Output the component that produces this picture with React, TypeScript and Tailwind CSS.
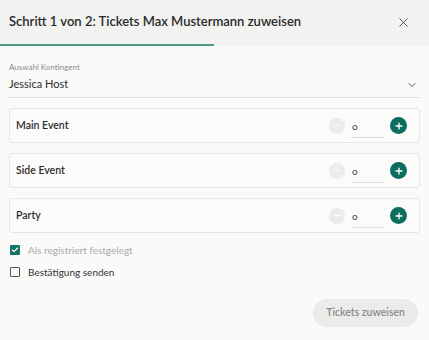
import { X, ChevronDown, Check, Plus, Minus } from 'lucide-react'

const events = ['Main Event', 'Side Event', 'Party']

function TicketRow({ name }: { name: string }) {
  return (
    <div className="flex items-center h-[35px] pl-[6px] pr-[12px] border border-[#e6e6e4] rounded-[3px] bg-[#fbfbfa]">
      <span className="flex-1 text-[10.5px] font-semibold text-[#2c2c2c]">{name}</span>
      <button className="w-[16px] h-[16px] rounded-full bg-[#ebebea] flex items-center justify-center">
        <Minus className="w-[9px] h-[9px] text-white" strokeWidth={3} />
      </button>
      <div className="ml-[6px] w-[33px] h-[24px] border-b border-[#dcdcdc] flex items-center">
        <span className="text-[10px] text-[#444] pl-[1px] pt-[2px]">o</span>
      </div>
      <button className="ml-[6px] w-[17px] h-[17px] rounded-full bg-[#0d6d5e] flex items-center justify-center">
        <Plus className="w-[10px] h-[10px] text-white" strokeWidth={3.2} />
      </button>
    </div>
  )
}

export default function App() {
  return (
    <div className="w-[429px] h-[340px] bg-[#fafaf9] font-['Lato',sans-serif] overflow-hidden">
      <div className="bg-[#f2f2f1] h-[44px] flex items-center justify-between pl-[9px] pr-[18px]">
        <h2 className="text-[13px] font-semibold text-[#2a2a2a]">
          Schritt 1 von 2: Tickets Max Mustermann zuweisen
        </h2>
        <X className="w-[15px] h-[15px] text-[#555]" strokeWidth={1.6} />
      </div>
      <div className="h-[2px] bg-[#f2f2f1]">
        <div className="h-full w-[214px] bg-[#4e9a8c]" />
      </div>

      <div className="px-[9px] pt-[17px]">
        <div className="text-[8px] text-[#8a8a8a] leading-none">Auswahl Kontingent</div>
        <div className="flex items-center justify-between h-[26px] mt-[1px] border-b border-[#dedede] pr-[2px]">
          <span className="text-[11px] text-[#2a2a2a]">Jessica Host</span>
          <ChevronDown className="w-[12px] h-[12px] text-[#555]" strokeWidth={2} />
        </div>

        <div className="flex flex-col gap-[10px] mt-[10px]">
          {events.map(e => (
            <TicketRow key={e} name={e} />
          ))}
        </div>

        <div className="flex flex-col gap-[8px] mt-[10px] pl-[1px]">
          <label className="flex items-center gap-[8px] h-[14px]">
            <span className="w-[10px] h-[10px] rounded-[1px] bg-[#137463] flex items-center justify-center">
              <Check className="w-[8px] h-[8px] text-white" strokeWidth={3.5} />
            </span>
            <span className="text-[10px] text-[#aaa]">Als registriert festgelegt</span>
          </label>
          <label className="flex items-center gap-[8px] h-[14px]">
            <span className="w-[10px] h-[10px] rounded-[1px] border-[1.5px] border-[#555]" />
            <span className="text-[10px] text-[#333]">Bestätigung senden</span>
          </label>
        </div>

        <div className="flex justify-end mt-[20px] pr-[2px]">
          <button className="h-[28px] px-[13px] rounded-full bg-[#ebebea] text-[10.5px] font-semibold text-[#8a8a8a]">
            Tickets zuweisen
          </button>
        </div>
      </div>
    </div>
  )
}
